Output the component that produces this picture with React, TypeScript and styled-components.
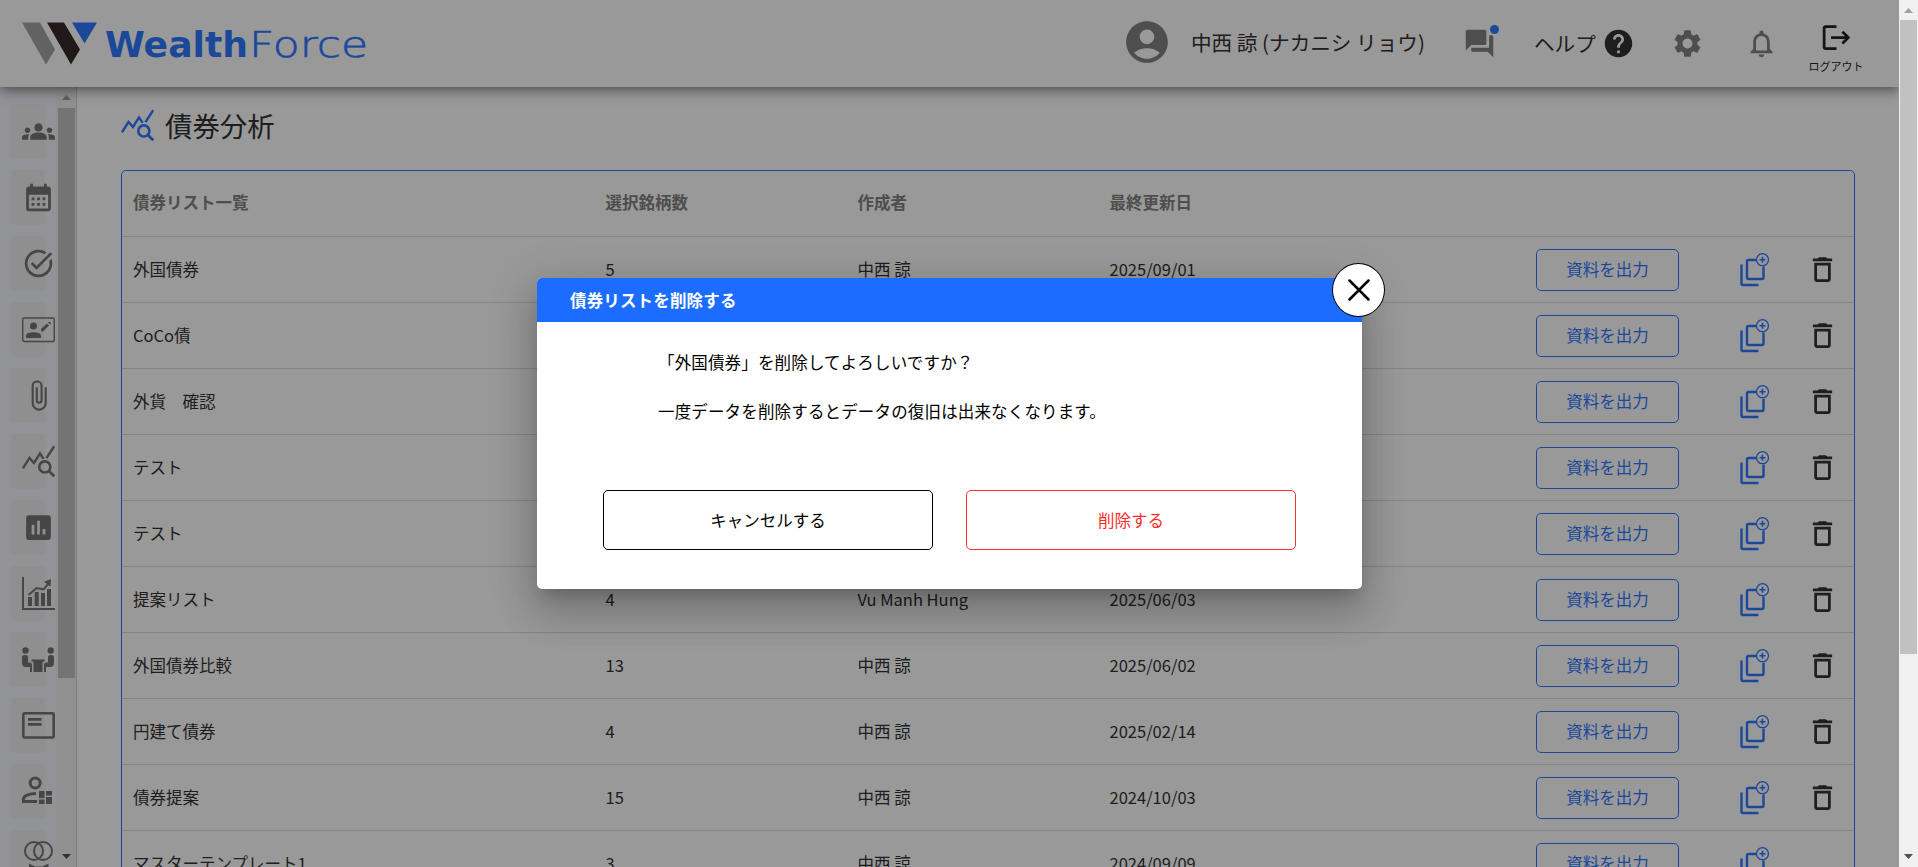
import React from "react";
import styled, { createGlobalStyle } from "styled-components";
import {
  MdGroups, MdTaskAlt, MdAttachFile, MdInsertChart, MdAccountCircle, MdCalendarMonth,
  MdQuestionAnswer, MdHelp, MdSettings, MdNotificationsNone, MdLogout, MdDeleteOutline,
} from "react-icons/md";

const BLUE = "#2f79ff";
const DIALOG_BLUE = "#1c6dff";

const Global = createGlobalStyle`
  * { box-sizing: border-box; }
  html { font-size: 16.5px; }
  body { margin: 0; overflow: hidden; background: #fff; color: #333;
    font-family: "Noto Sans CJK JP", sans-serif; font-size: 1rem; line-height: 1.5; }
  button { font: inherit; background: none; border: 0; padding: 0; color: inherit; }
`;

const Screen = styled.div`
  display: flex; height: 867px; width: 1918px; overflow: hidden; position: relative;
`;
const Page = styled.div`
  width: 1899px; height: 867px; display: flex; flex-direction: column; overflow: hidden;
`;
const Header = styled.header`
  height: 87px; flex: none; display: flex; align-items: center; background: #fff;
  box-shadow: 0 3px 12px rgba(0,0,0,.5); position: relative; z-index: 1;
  padding-left: 21px;
`;
const HeaderTools = styled.div`
  margin-left: auto; display: flex; align-items: center; height: 87px; padding-right: 36px;
`;
const Avatar = styled.span`
  display: flex; color: #828282; margin-right: 19px; padding-bottom: 3px;
`;
const UserName = styled.span`
  font-size: 20.625px; color: #333; margin-right: 37px; width: 235px; white-space: nowrap; padding-bottom: 2px;
`;
const ChatTool = styled.span`
  display: flex; position: relative; color: #828282; margin-right: 38px; width: 33px;
`;
const UnreadDot = styled.i`
  position: absolute; top: -2px; right: -3px; width: 9px; height: 9px; border-radius: 50%; background: ${BLUE};
`;
const HelpTool = styled.span`
  display: flex; align-items: center; gap: 6px; font-size: 20.6px; margin-right: 36px; width: 101px; white-space: nowrap;
  svg { flex: none; }
`;
const IconTool = styled.span<{ $gap: number }>`
  display: flex; color: #828282; margin-right: ${p => p.$gap}px;
`;
const LogoutTool = styled.span`
  display: flex; flex-direction: column; align-items: center; color: #222; font-size: 11px; line-height: 16px; width: 54px;
  white-space: nowrap; padding-top: 8px;
  svg { margin: 0 0 4px 0; }
`;
const Body = styled.div`display: flex; flex: 1; min-height: 0;`;
const Sidebar = styled.nav`
  width: 77px; flex: none; display: flex; border-right: 1px solid #d0d0d0;
`;
const MenuList = styled.div`
  width: 56px; background: #f3f5fb; padding: 17px 0 0 11px; overflow: hidden;
`;
const MenuItem = styled.div`
  width: 34px; height: 55px; margin-bottom: 11px; border-radius: 4px; background: #eee;
  display: flex; align-items: center; padding-left: 11px; color: #757575;
  svg { flex: none; }
`;
const MenuScroll = styled.div`
  width: 20px; background: #f0f0f0; display: flex; flex-direction: column; align-items: center;
`;
const Thumb = styled.div<{ $w: number; $h: number }>`
  width: ${p => p.$w}px; height: ${p => p.$h}px; background: #c1c1c1;
`;
const ArrowBox = styled.div<{ $h: number; $bottom?: boolean }>`
  height: ${p => p.$h}px; display: flex; align-items: center; justify-content: center;
  margin-top: ${p => (p.$bottom ? "auto" : 0)};
`;
const Main = styled.main`flex: 1; padding: 18px 44px 0 44px; min-width: 0;`;
const Title = styled.h1`
  margin: 0 0 24px; height: 41px; display: flex; align-items: center; gap: 11px; font-size: 27.4px; font-weight: 400;
  color: #333; svg { color: ${BLUE}; }
`;
const Table = styled.section`
  border: 1px solid ${BLUE}; border-radius: 5px; height: 760px;
`;
const Row = styled.div`
  height: 66px; display: grid; grid-template-columns: 472.5px 252px 252px 426.5px 204px 66px 1fr; align-items: center;
  padding-left: 11px; border-bottom: 1px solid #dcdcdc;
`;
const HeadCell = styled.span`font-weight: 700; color: #828282; padding-bottom: 2px;`;
const ExportButton = styled.button`
  width: 143px; height: 42px; border: 1px solid ${BLUE}; border-radius: 5px; color: ${BLUE};
`;
const RowIcon = styled.span<{ $blue?: boolean }>`
  display: flex; color: ${p => (p.$blue ? BLUE : "#333")};
  svg { flex: none; }
`;
const PageScroll = styled.div`
  width: 19px; background: #f0f0f0; display: flex; flex-direction: column; align-items: center; position: relative; z-index: 6;
`;
const Overlay = styled.div`
  position: absolute; left: 0; top: 0; width: 1899px; height: 867px; background: rgba(0,0,0,.4); z-index: 5;
`;
const Dialog = styled.div`
  position: absolute; left: 537px; top: 278px; width: 825px; height: 311px; background: #fff; border-radius: 5px;
  box-shadow: 0 11px 15px -7px rgba(0,0,0,.2), 0 24px 38px 3px rgba(0,0,0,.14), 0 9px 46px 8px rgba(0,0,0,.12);
  color: #000;
`;
const DialogHead = styled.div`
  height: 44px; background: ${DIALOG_BLUE}; color: #fff; font-weight: 700; padding-left: 33px; border-radius: 5px 5px 0 0;
  display: flex; align-items: center; letter-spacing: .00938em;
`;
const CloseButton = styled.button`
  position: absolute; right: -23px; top: -15px; width: 53px; height: 54px; border-radius: 50%; background: #fff;
  border: 1px solid #000; display: flex; align-items: center; justify-content: center;
`;
const Message = styled.div`
  padding: 28px 0 0 121px; height: 168px; letter-spacing: .00938em;
  p { margin: 0 0 24.5px; }
`;
const Actions = styled.div`display: flex; gap: 33px; padding-left: 66px;`;
const ActionButton = styled.button<{ $danger?: boolean }>`
  width: 330px; height: 60px; border-radius: 5px; border: 1px solid ${p => (p.$danger ? "#ff3232" : "#000")};
  color: ${p => (p.$danger ? "#ff2b2b" : "#000")};
`;

const Logo = () => (
  <svg width="350" height="46" viewBox="0 0 350 46">
    <path d="M1 1.500H19L34 28.500 25 43.500Z" fill="#a4a4a4" />
    <path d="M26 1.500H43L59 28.500 50 43.500Z" fill="#382b27" />
    <path d="M51 1.500H76L63.500 22.500Z" fill={BLUE} />
    <g fill={BLUE} fontFamily="DejaVu Sans" fontSize="35.500">
      <text x="84" y="36" fontWeight="700" textLength="143" lengthAdjust="spacingAndGlyphs">Wealth</text>
      <text x="228" y="36" fontWeight="200" textLength="119" lengthAdjust="spacingAndGlyphs" stroke={BLUE} strokeWidth=".6">Force</text>
    </g>
  </svg>
);

const Arrow = ({ up, color }: { up?: boolean; color: string }) => (
  <svg width="9" height="5" viewBox="0 0 9 5"><path d={up ? "M0 5L4.500 0 9 5Z" : "M0 0L4.500 5 9 0Z"} fill={color} /></svg>
);

const CloseIcon = () => (
  <svg width="22" height="22" viewBox="0 0 22 22" stroke="#000" strokeWidth="2.500" strokeLinecap="round">
    <path d="M1.500 1.500L20.500 20.500M20.500 1.500L1.500 20.500" />
  </svg>
);
const TrendIcon = () => (
  <svg width="33" height="33" viewBox="1 0 22 22" fill="none" stroke="currentColor" strokeWidth="1.600">
    <path d="M1.600 15.600L6 8.600 9 12 13 5.600 15.400 9.200M17.300 8.800L22.500 .8" />
    <circle cx="16.200" cy="14.600" r="3.700" strokeWidth="1.700" />
    <path d="M18.900 17.300L22.500 20.800" strokeWidth="1.800" />
  </svg>
);
const ContactIcon = () => (
  <svg width="33" height="33" viewBox="0 0 33 33">
    <rect x=".75" y="5" width="31.500" height="23.500" rx="1.500" fill="none" stroke="currentColor" strokeWidth="1.400" />
    <circle cx="11.500" cy="13" r="3.500" fill="currentColor" />
    <path d="M4 25V22.500C4 18 19 18 19 22.500V25ZM19 16L25 10.500 27 12.500 21 18.500H19ZM26 9.700L27.400 8.600 29.100 10.300 27.900 11.600Z" fill="currentColor" />
  </svg>
);
const GrowthIcon = () => (
  <svg width="33" height="33" viewBox="0 0 33 33" fill="none" stroke="currentColor">
    <path d="M1 0V32H33" strokeWidth="2" />
    <path d="M8 29V20M14.700 29V15M21 29V16M27 29V12" strokeWidth="4" />
    <path d="M6.500 18L14.500 11 21.500 12.300 27 6" strokeWidth="2" />
    <path d="M22 4.800L29 2 28.500 9.800Z" fill="currentColor" stroke="none" />
  </svg>
);
const MeetingIcon = () => (
  <svg width="33" height="33" viewBox="0 0 33 33" fill="currentColor">
    <circle cx="3.500" cy="7.500" r="3.200" /><circle cx="28.700" cy="7.500" r="3.200" />
    <path d="M0 14Q0 12 3 12 6 12 6 14V19.500H8Q10 19.500 10 22V29H8V24H4Q0 24 0 20ZM32 14Q32 12 29 12 26 12 26 14V19.500H24Q22 19.500 22 22V29H24V24H28Q32 24 32 20ZM9.500 16.500H22.500V18.500H20.500V29H11.500V18.500H9.500Z" />
  </svg>
);
const CardIcon = () => (
  <svg width="33" height="33" viewBox="0 0 33 33" fill="none" stroke="currentColor">
    <rect x="1.300" y="4.300" width="30.400" height="24.200" rx="1.500" strokeWidth="2.600" />
    <path d="M6 10.300H19.500M6 15.400H19.500" strokeWidth="2.700" />
  </svg>
);
const UserGridIcon = () => (
  <svg width="33" height="33" viewBox="0 0 33 33" fill="none" stroke="currentColor">
    <circle cx="13.200" cy="8" r="5" strokeWidth="3" />
    <path d="M14 18.500C7 18.500 1.500 21 1.500 24V26.500H15" strokeWidth="3" />
    <path d="M17 16H22.500V23H17ZM24 16H30V20.500H24ZM17 24.500H22.500V29H17ZM24 22H30V29H24Z" fill="currentColor" stroke="none" />
  </svg>
);
const RingsIcon = () => (
  <svg width="33" height="33" viewBox="0 0 33 33">
    <g fill="none" stroke="currentColor" strokeWidth="2"><circle cx="12" cy="10" r="9" /><circle cx="21" cy="10" r="9" /></g>
    <path d="M7 22.500L13 25.500H20L26.500 22.500V33H7Z" fill="currentColor" />
  </svg>
);
const CopyAddIcon = () => (
  <svg width="30" height="34" viewBox="0 0 30 34" fill="none" stroke="currentColor">
    <path d="M1.500 11.500V30.500Q1.500 32 3 32H18.500" strokeWidth="2.400" />
    <path d="M16 7H8.500Q7 7 7 8.500V24.500Q7 26 8.500 26H22Q23.500 26 23.500 24.500V13.500" strokeWidth="2.400" />
    <circle cx="22.500" cy="6.700" r="6" strokeWidth="1.300" />
    <path d="M22.500 3.700V9.700M19.500 6.700H25.500" strokeWidth="1.600" />
  </svg>
);

const menu = [
  <MdGroups size={33} />, <MdCalendarMonth size={33} />, <MdTaskAlt size={33} />, <ContactIcon />, <MdAttachFile size={33} />,
  <TrendIcon />, <MdInsertChart size={33} />, <GrowthIcon />, <MeetingIcon />, <CardIcon />, <UserGridIcon />, <RingsIcon />,
];

const lists: { name: string; count: string; author: string; date: string; fixed?: boolean }[] = [
  { name: "外国債券", count: "5", author: "中西 諒", date: "2025/09/01" },
  { name: "CoCo債", count: "6", author: "中西 諒", date: "2025/08/21" },
  { name: "外貨　確認", count: "3", author: "中西 諒", date: "2025/07/30" },
  { name: "テスト", count: "2", author: "中西 諒", date: "2025/07/10" },
  { name: "テスト", count: "2", author: "中西 諒", date: "2025/06/24" },
  { name: "提案リスト", count: "4", author: "Vu Manh Hung", date: "2025/06/03" },
  { name: "外国債券比較", count: "13", author: "中西 諒", date: "2025/06/02" },
  { name: "円建て債券", count: "4", author: "中西 諒", date: "2025/02/14" },
  { name: "債券提案", count: "15", author: "中西 諒", date: "2024/10/03" },
  { name: "マスターテンプレート1", count: "3", author: "中西 諒", date: "2024/09/09", fixed: true },
];

export default function App() {
  return (
    <Screen>
      <Global />
      <Page>
        <Header>
          <Logo />
          <HeaderTools>
            <Avatar><MdAccountCircle size={50} /></Avatar>
            <UserName>中西 諒 (ナカニシ リョウ)</UserName>
            <ChatTool><MdQuestionAnswer size={33} /><UnreadDot /></ChatTool>
            <HelpTool>ヘルプ<MdHelp size={33} /></HelpTool>
            <IconTool $gap={41}><MdSettings size={33} /></IconTool>
            <IconTool $gap={31}><MdNotificationsNone size={33} /></IconTool>
            <LogoutTool><MdLogout size={33} />ログアウト</LogoutTool>
          </HeaderTools>
        </Header>
        <Body>
          <Sidebar>
            <MenuList>{menu.map((icon, i) => <MenuItem key={i}>{icon}</MenuItem>)}</MenuList>
            <MenuScroll>
              <ArrowBox $h={21}><Arrow up color="#a0a0a0" /></ArrowBox>
              <Thumb $w={17} $h={570} />
              <ArrowBox $h={21} $bottom><Arrow color="#505050" /></ArrowBox>
            </MenuScroll>
          </Sidebar>
          <Main>
            <Title><TrendIcon />債券分析</Title>
            <Table>
              <Row>
                <HeadCell>債券リスト一覧</HeadCell><HeadCell>選択銘柄数</HeadCell><HeadCell>作成者</HeadCell><HeadCell>最終更新日</HeadCell>
              </Row>
              {lists.map(l => (
                <Row key={l.date}>
                  <span>{l.name}</span><span>{l.count}</span><span>{l.author}</span><span>{l.date}</span>
                  <ExportButton>資料を出力</ExportButton>
                  <RowIcon $blue><CopyAddIcon /></RowIcon>
                  {!l.fixed && <RowIcon><MdDeleteOutline size={33} /></RowIcon>}
                </Row>
              ))}
            </Table>
          </Main>
        </Body>
      </Page>
      <PageScroll>
        <ArrowBox $h={20}><Arrow up color="#a0a0a0" /></ArrowBox>
        <Thumb $w={17} $h={634} />
        <ArrowBox $h={21} $bottom><Arrow color="#505050" /></ArrowBox>
      </PageScroll>
      <Overlay>
        <Dialog role="dialog">
          <DialogHead>債券リストを削除する</DialogHead>
          <CloseButton aria-label="閉じる"><CloseIcon /></CloseButton>
          <Message>
            <p>「外国債券」を削除してよろしいですか？</p>
            <p>一度データを削除するとデータの復旧は出来なくなります。</p>
          </Message>
          <Actions>
            <ActionButton>キャンセルする</ActionButton>
            <ActionButton $danger>削除する</ActionButton>
          </Actions>
        </Dialog>
      </Overlay>
    </Screen>
  );
}
